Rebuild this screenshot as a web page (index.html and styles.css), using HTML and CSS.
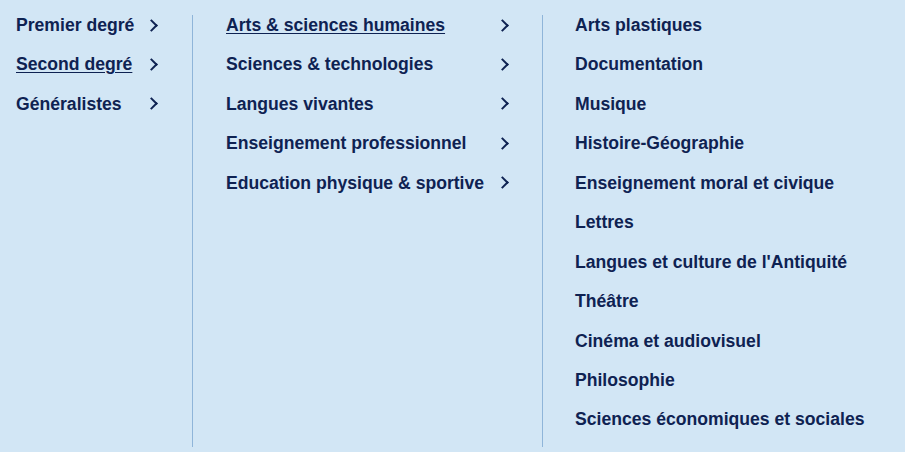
FILE: index.html
```html
<!DOCTYPE html>
<html lang="fr">
<head>
    <meta charset="UTF-8">
    <meta name="viewport" content="width=device-width, initial-scale=1.0">
    <title>Menu disciplines</title>
    <link rel="stylesheet" href="styles.css">
</head>
<body>
    <nav class="mega-menu">
        <!-- Niveaux -->
        <ul class="menu-col col-levels">
            <li><a href="#">Premier degré</a><span class="chevron"></span></li>
            <li><a href="#" class="active">Second degré</a><span class="chevron"></span></li>
            <li><a href="#">Généralistes</a><span class="chevron"></span></li>
        </ul>

        <!-- Domaines -->
        <ul class="menu-col col-domains">
            <li><a href="#" class="active">Arts &amp; sciences humaines</a><span class="chevron"></span></li>
            <li><a href="#">Sciences &amp; technologies</a><span class="chevron"></span></li>
            <li><a href="#">Langues vivantes</a><span class="chevron"></span></li>
            <li><a href="#">Enseignement professionnel</a><span class="chevron"></span></li>
            <li><a href="#">Education physique &amp; sportive</a><span class="chevron"></span></li>
        </ul>

        <!-- Disciplines -->
        <ul class="menu-col col-subjects">
            <li><a href="#">Arts plastiques</a></li>
            <li><a href="#">Documentation</a></li>
            <li><a href="#">Musique</a></li>
            <li><a href="#">Histoire-Géographie</a></li>
            <li><a href="#">Enseignement moral et civique</a></li>
            <li><a href="#">Lettres</a></li>
            <li><a href="#">Langues et culture de l'Antiquité</a></li>
            <li><a href="#">Théâtre</a></li>
            <li><a href="#">Cinéma et audiovisuel</a></li>
            <li><a href="#">Philosophie</a></li>
            <li><a href="#">Sciences économiques et sociales</a></li>
        </ul>
    </nav>
</body>
</html>
```

FILE: styles.css
```css
:root {
    --bg: #d2e6f5;
    --text: #0e2252;
    --divider: #8fb5d9;
}

* {
    margin: 0;
    padding: 0;
    box-sizing: border-box;
}

body {
    background-color: var(--bg);
    color: var(--text);
    font-family: 'Liberation Sans', Arial, sans-serif;
    height: 452px;
    overflow: hidden;
}

.mega-menu {
    display: flex;
    padding: 15px 0 5px;
    height: 452px;
}

.menu-col {
    list-style: none;
    display: flex;
    flex-direction: column;
    gap: 19.45px;
}

.menu-col + .menu-col {
    border-left: 1px solid var(--divider);
}

.menu-col li {
    display: flex;
    align-items: center;
    justify-content: space-between;
    height: 20px;
    line-height: 20px;
}

.menu-col a {
    color: var(--text);
    font-size: 17.6px;
    font-weight: bold;
    text-decoration: none;
}

.menu-col a.active {
    text-decoration: underline;
    text-underline-offset: 2px;
}

.col-levels {
    width: 192px;
    padding: 0 33px 0 16px;
}

.col-domains {
    width: 350px;
    padding: 0 32px 0 33px;
}

.col-subjects {
    flex: 1;
    padding-left: 32px;
}

.chevron {
    width: 9px;
    height: 9px;
    border-top: 2.5px solid var(--text);
    border-right: 2.5px solid var(--text);
    transform: rotate(45deg);
    margin-right: 3px;
}
```
